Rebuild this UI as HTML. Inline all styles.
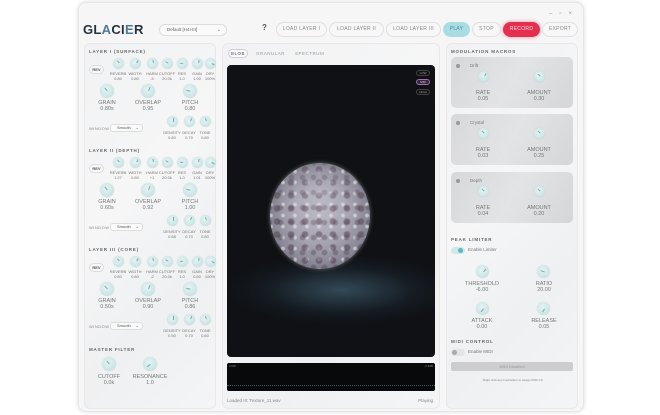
<!DOCTYPE html>
<html><head><meta charset="utf-8"><style>
*{box-sizing:border-box;margin:0;padding:0}
body{width:660px;height:415px;background:#fff;font-family:"Liberation Sans",sans-serif;position:relative;overflow:hidden;color:#555}
.win{position:absolute;left:78px;top:2px;width:506px;height:410px;background:#f6f6f7;border-radius:8px;box-shadow:0 0 4px rgba(0,0,0,.15);border:1px solid #e6e6e8}
.a{position:absolute}
.btn{position:absolute;top:22px;height:15px;border:1px solid #e0e0e3;border-radius:8px;background:#f7f7f8;font-size:5px;letter-spacing:.3px;color:#888;text-align:center;line-height:13px}
.panel{position:absolute;top:43px;background:linear-gradient(135deg,#f1f2f3,#f6f6f7 40%,#eef0f1 70%,#f4f5f6);border:1px solid #e8e8ea;border-radius:6px}
.k{position:absolute;border-radius:50%;background:radial-gradient(circle at 45% 40%,#e6f4f4,#c9e3e4 70%,#b9d8da);box-shadow:0 0 1px rgba(0,0,0,.15)}
.k::after{content:"";position:absolute;left:50%;top:22%;width:1px;height:30%;background:#7aa;transform-origin:50% 100%;transform:rotate(var(--r,30deg))}
.t{position:absolute;font-size:4px;color:#777;text-align:center;width:24px;margin-left:-12px;line-height:5px}
.T{position:absolute;font-size:5.5px;color:#777;text-align:center;width:40px;margin-left:-20px;line-height:6px}
.h{position:absolute;font-size:4.5px;letter-spacing:.8px;color:#666;font-weight:bold}
.rev{position:absolute;width:15px;height:9px;border:1px solid #ddd;border-radius:5px;background:#f8f8f9;font-size:4px;line-height:7px;text-align:center;color:#555;font-weight:bold}
.sel{position:absolute;height:8px;border:1px solid #ddd;border-radius:3px;background:#fafafa;font-size:4px;line-height:6px;padding-left:6px;color:#555}
.card{position:absolute;left:4px;width:122px;height:51px;border-radius:5px;background:linear-gradient(120deg,#d6d8d9,#e2e4e5 50%,#d4d6d7)}
.tog{position:absolute;width:14px;height:7px;border-radius:4px}
</style></head><body>
<div class="win">
 <div class="a" style="left:470px;top:8px;font-size:6px;color:#999;letter-spacing:7px">–▫×</div>
</div>
<div class="a" style="left:83px;top:22px;font-size:13px;font-weight:bold;color:#27323d;letter-spacing:.3px">GL<span style="color:#4f7b99">A</span>CI<span style="color:#4f7b99">E</span>R</div>
<div class="a" style="left:159px;top:24px;width:68px;height:12px;border:1px solid #ddd;border-radius:6px;background:#fafafa;font-size:4.5px;line-height:10px;padding-left:7px;color:#666">Default [H4+III]<span style="position:absolute;right:5px;font-size:5px">⌄</span></div>
<div class="a" style="left:262px;top:23px;font-size:8px;font-weight:bold;color:#555">?</div>
<div class="btn" style="left:276px;width:51px">LOAD LAYER I</div>
<div class="btn" style="left:329px;width:55px">LOAD LAYER II</div>
<div class="btn" style="left:386px;width:55px">LOAD LAYER III</div>
<div class="btn" style="left:443px;width:27px;background:#a9dde3;border-color:#a9dde3;color:#4a8a93">PLAY</div>
<div class="btn" style="left:472px;width:29px">STOP</div>
<div class="btn" style="left:503px;width:37px;background:#e3304e;border-color:#e3304e;color:#fde;box-shadow:0 0 4px rgba(227,48,78,.5)">RECORD</div>
<div class="btn" style="left:542px;width:36px">EXPORT</div>

<!-- LEFT PANEL -->
<div class="panel" style="left:84px;width:132px;height:366px">
 <div class="a" style="left:0;top:2px;width:132px;height:98px">
  <div class="h" style="left:4px;top:3px">LAYER I (SURFACE)</div>
  <div class="rev" style="left:4px;top:19px">REV</div>
  <div class="k" style="left:28px;top:12px;width:11px;height:11px;--r:-40deg"></div><div class="k" style="left:45px;top:12px;width:11px;height:11px"></div><div class="k" style="left:62px;top:12px;width:11px;height:11px;--r:-10deg"></div><div class="k" style="left:77px;top:12px;width:11px;height:11px;--r:-60deg"></div><div class="k" style="left:92px;top:12px;width:11px;height:11px;--r:-90deg"></div><div class="k" style="left:107px;top:12px;width:11px;height:11px;--r:10deg"></div><div class="k" style="left:120px;top:12px;width:11px;height:11px;--r:120deg"></div>
  <div class="t" style="left:33px;top:25px">REVERB<br>0.80</div><div class="t" style="left:50px;top:25px">WIDTH<br>0.80</div><div class="t" style="left:67px;top:25px">HARM<br>-5</div><div class="t" style="left:82px;top:25px">CUTOFF<br>20.0k</div><div class="t" style="left:97px;top:25px">RES<br>1.0</div><div class="t" style="left:112px;top:25px">GAIN<br>1.00</div><div class="t" style="left:125px;top:25px">DRY<br>100%</div>
  <div class="k" style="left:15px;top:38px;width:14px;height:14px;--r:-40deg"></div><div class="k" style="left:56px;top:38px;width:14px;height:14px;--r:20deg"></div><div class="k" style="left:98px;top:38px;width:14px;height:14px;--r:-80deg"></div>
  <div class="T" style="left:22px;top:54px">GRAIN<br>0.80s</div><div class="T" style="left:63px;top:54px">OVERLAP<br>0.95</div><div class="T" style="left:105px;top:54px">PITCH<br>0.80</div>
  <div class="a" style="left:4px;top:80px;font-size:4px;color:#888;letter-spacing:.5px">WINDOW</div>
  <div class="sel" style="left:25px;top:78px;width:33px">Smooth<span style="position:absolute;right:3px">⌄</span></div>
  <div class="k" style="left:82px;top:70px;width:11px;height:11px;--r:0deg"></div><div class="k" style="left:99px;top:70px;width:11px;height:11px;--r:20deg"></div><div class="k" style="left:115px;top:70px;width:11px;height:11px;--r:-20deg"></div>
  <div class="t" style="left:87px;top:84px">DENSITY<br>0.80</div><div class="t" style="left:104px;top:84px">DECAY<br>0.70</div><div class="t" style="left:120px;top:84px">TONE<br>0.80</div>
 </div>
 <div class="a" style="left:0;top:101px;width:132px;height:98px">
  <div class="h" style="left:4px;top:3px">LAYER II (DEPTH)</div>
  <div class="rev" style="left:4px;top:19px">REV</div>
  <div class="k" style="left:28px;top:12px;width:11px;height:11px;--r:-40deg"></div><div class="k" style="left:45px;top:12px;width:11px;height:11px"></div><div class="k" style="left:62px;top:12px;width:11px;height:11px;--r:-10deg"></div><div class="k" style="left:77px;top:12px;width:11px;height:11px;--r:-60deg"></div><div class="k" style="left:92px;top:12px;width:11px;height:11px;--r:-90deg"></div><div class="k" style="left:107px;top:12px;width:11px;height:11px;--r:10deg"></div><div class="k" style="left:120px;top:12px;width:11px;height:11px;--r:120deg"></div>
  <div class="t" style="left:33px;top:25px">REVERB<br>1.27</div><div class="t" style="left:50px;top:25px">WIDTH<br>0.80</div><div class="t" style="left:67px;top:25px">HARM<br>+1</div><div class="t" style="left:82px;top:25px">CUTOFF<br>20.0k</div><div class="t" style="left:97px;top:25px">RES<br>1.0</div><div class="t" style="left:112px;top:25px">GAIN<br>1.01</div><div class="t" style="left:125px;top:25px">DRY<br>100%</div>
  <div class="k" style="left:15px;top:38px;width:14px;height:14px;--r:-40deg"></div><div class="k" style="left:56px;top:38px;width:14px;height:14px;--r:20deg"></div><div class="k" style="left:98px;top:38px;width:14px;height:14px;--r:-80deg"></div>
  <div class="T" style="left:22px;top:54px">GRAIN<br>0.60s</div><div class="T" style="left:63px;top:54px">OVERLAP<br>0.92</div><div class="T" style="left:105px;top:54px">PITCH<br>1.00</div>
  <div class="a" style="left:4px;top:80px;font-size:4px;color:#888;letter-spacing:.5px">WINDOW</div>
  <div class="sel" style="left:25px;top:78px;width:33px">Smooth<span style="position:absolute;right:3px">⌄</span></div>
  <div class="k" style="left:82px;top:70px;width:11px;height:11px;--r:0deg"></div><div class="k" style="left:99px;top:70px;width:11px;height:11px;--r:20deg"></div><div class="k" style="left:115px;top:70px;width:11px;height:11px;--r:-20deg"></div>
  <div class="t" style="left:87px;top:84px">DENSITY<br>0.68</div><div class="t" style="left:104px;top:84px">DECAY<br>0.70</div><div class="t" style="left:120px;top:84px">TONE<br>0.80</div>
 </div>
 <div class="a" style="left:0;top:200px;width:132px;height:98px">
  <div class="h" style="left:4px;top:3px">LAYER III (CORE)</div>
  <div class="rev" style="left:4px;top:19px">REV</div>
  <div class="k" style="left:28px;top:12px;width:11px;height:11px;--r:-40deg"></div><div class="k" style="left:45px;top:12px;width:11px;height:11px"></div><div class="k" style="left:62px;top:12px;width:11px;height:11px;--r:-10deg"></div><div class="k" style="left:77px;top:12px;width:11px;height:11px;--r:-60deg"></div><div class="k" style="left:92px;top:12px;width:11px;height:11px;--r:-90deg"></div><div class="k" style="left:107px;top:12px;width:11px;height:11px;--r:10deg"></div><div class="k" style="left:120px;top:12px;width:11px;height:11px;--r:120deg"></div>
  <div class="t" style="left:33px;top:25px">REVERB<br>0.80</div><div class="t" style="left:50px;top:25px">WIDTH<br>0.80</div><div class="t" style="left:67px;top:25px">HARM<br>-2</div><div class="t" style="left:82px;top:25px">CUTOFF<br>20.0k</div><div class="t" style="left:97px;top:25px">RES<br>1.0</div><div class="t" style="left:112px;top:25px">GAIN<br>0.80</div><div class="t" style="left:125px;top:25px">DRY<br>100%</div>
  <div class="k" style="left:15px;top:38px;width:14px;height:14px;--r:-40deg"></div><div class="k" style="left:56px;top:38px;width:14px;height:14px;--r:20deg"></div><div class="k" style="left:98px;top:38px;width:14px;height:14px;--r:-80deg"></div>
  <div class="T" style="left:22px;top:54px">GRAIN<br>0.50s</div><div class="T" style="left:63px;top:54px">OVERLAP<br>0.90</div><div class="T" style="left:105px;top:54px">PITCH<br>0.86</div>
  <div class="a" style="left:4px;top:80px;font-size:4px;color:#888;letter-spacing:.5px">WINDOW</div>
  <div class="sel" style="left:25px;top:78px;width:33px">Smooth<span style="position:absolute;right:3px">⌄</span></div>
  <div class="k" style="left:82px;top:70px;width:11px;height:11px;--r:0deg"></div><div class="k" style="left:99px;top:70px;width:11px;height:11px;--r:20deg"></div><div class="k" style="left:115px;top:70px;width:11px;height:11px;--r:-20deg"></div>
  <div class="t" style="left:87px;top:84px">DENSITY<br>0.50</div><div class="t" style="left:104px;top:84px">DECAY<br>0.70</div><div class="t" style="left:120px;top:84px">TONE<br>0.80</div>
 </div>
 <div class="h" style="left:4px;top:303px">MASTER FILTER</div>
 <div class="k" style="left:17px;top:313px;width:14px;height:14px;--r:-40deg"></div><div class="k" style="left:58px;top:313px;width:14px;height:14px;--r:-130deg"></div>
 <div class="T" style="left:24px;top:330px">CUTOFF<br>0.0k</div><div class="T" style="left:65px;top:330px">RESONANCE<br>1.0</div>
</div>

<!-- CENTER -->
<div class="panel" style="left:222px;width:218px;height:366px">
 <div class="a" style="left:5px;top:5px;width:20px;height:9px;border:1px solid #d8c8dc;border-radius:5px;background:#fafafa;font-size:4.5px;line-height:7px;text-align:center;color:#556;letter-spacing:.5px">BLOB</div>
 <div class="a" style="left:33px;top:7px;font-size:4.5px;color:#999;letter-spacing:.5px">GRANULAR</div>
 <div class="a" style="left:72px;top:7px;font-size:4.5px;color:#999;letter-spacing:.5px">SPECTRUM</div>
 <div class="a" style="left:4px;top:21px;width:208px;height:292px;background:#0f1115;border-radius:4px;overflow:hidden">
  <div class="a" style="left:0;top:190px;width:208px;height:70px;background:radial-gradient(ellipse at 55% 50%,rgba(80,120,140,.55),rgba(40,60,75,.25) 45%,transparent 70%)"></div>
  <div class="a" style="left:43px;top:98px;width:100px;height:106px;border-radius:50%;background:radial-gradient(circle at 50% 50%,#b4b0bc,#a6a2b0 40%,#8a8896 65%,#62626e 85%,#3e3e48);box-shadow:0 0 4px #666"></div>
  <div class="a" style="left:43px;top:98px;width:100px;height:106px;border-radius:50%;background:radial-gradient(circle,rgba(70,50,65,.55) 0 2.5px,transparent 4px) 0 0/14px 13px,radial-gradient(circle,rgba(70,55,70,.4) 0 2px,transparent 3.5px) 5px 7px/11px 15px,radial-gradient(circle,rgba(235,238,242,.7) 0 1.2px,transparent 2.5px) 7px 3px/12px 11px;opacity:.85"></div>
  <div class="a" style="left:43px;top:98px;width:100px;height:106px;border-radius:50%;background:radial-gradient(circle at 50% 30%,rgba(230,230,240,.25),transparent 50%)"></div>
  <div class="a" style="right:5px;top:5px;width:14px;height:6px;border:1px solid #444;border-radius:3px;font-size:3px;color:#aaa;text-align:center;line-height:4px;background:#111">LOW</div>
  <div class="a" style="right:5px;top:14px;width:14px;height:6px;border:1px solid #a070b0;border-radius:3px;font-size:3px;color:#ddd;text-align:center;line-height:4px;background:#3a2440">MID</div>
  <div class="a" style="right:5px;top:24px;width:14px;height:6px;border:1px solid #444;border-radius:3px;font-size:3px;color:#aaa;text-align:center;line-height:4px;background:#111">HIGH</div>
 </div>
 <div class="a" style="left:4px;top:319px;width:208px;height:28px;background:#07090a;border-radius:2px">
  <div class="a" style="left:0;top:22px;width:208px;height:1px;border-top:1px dotted #2c6a6a"></div>
  <div class="a" style="left:2px;top:1px;font-size:3px;color:#888">LOW</div>
  <div class="a" style="right:2px;top:1px;font-size:3px;color:#888">-1.5dB</div>
 </div>
 <div class="a" style="left:4px;top:354px;font-size:4.5px;color:#888">Loaded III: Texture_11.wav</div>
 <div class="a" style="right:6px;top:354px;font-size:4.5px;color:#888">Playing</div>
</div>

<!-- RIGHT -->
<div class="panel" style="left:446px;width:132px;height:366px">
 <div class="h" style="left:4px;top:5px">MODULATION MACROS</div>
 <div class="card" style="top:13px">
  <div class="a" style="left:5px;top:7px;width:4px;height:4px;border-radius:50%;background:#999"></div>
  <div class="a" style="left:19px;top:6px;font-size:4.5px;color:#777">Drift</div>
  <div class="k" style="left:27px;top:14px;width:11px;height:11px"></div><div class="k" style="left:83px;top:14px;width:11px;height:11px;--r:-50deg"></div>
  <div class="T" style="left:32px;top:33px">RATE<br>0.05</div><div class="T" style="left:88px;top:33px">AMOUNT<br>0.30</div>
 </div>
 <div class="card" style="top:70px">
  <div class="a" style="left:5px;top:7px;width:4px;height:4px;border-radius:50%;background:#999"></div>
  <div class="a" style="left:19px;top:6px;font-size:4.5px;color:#777">Crystal</div>
  <div class="k" style="left:27px;top:14px;width:11px;height:11px;--r:-50deg"></div><div class="k" style="left:83px;top:14px;width:11px;height:11px;--r:-50deg"></div>
  <div class="T" style="left:32px;top:33px">RATE<br>0.03</div><div class="T" style="left:88px;top:33px">AMOUNT<br>0.25</div>
 </div>
 <div class="card" style="top:128px">
  <div class="a" style="left:5px;top:7px;width:4px;height:4px;border-radius:50%;background:#999"></div>
  <div class="a" style="left:19px;top:6px;font-size:4.5px;color:#777">Depth</div>
  <div class="k" style="left:27px;top:14px;width:11px;height:11px;--r:-50deg"></div><div class="k" style="left:83px;top:14px;width:11px;height:11px;--r:-50deg"></div>
  <div class="T" style="left:32px;top:33px">RATE<br>0.04</div><div class="T" style="left:88px;top:33px">AMOUNT<br>0.20</div>
 </div>
 <div class="h" style="left:4px;top:193px">PEAK LIMITER</div>
 <div class="tog" style="left:4px;top:203px;background:#cfe8ec"><div class="a" style="left:7px;top:1px;width:5px;height:5px;border-radius:50%;background:#5bb8c6"></div></div>
 <div class="a" style="left:21px;top:203px;font-size:4.5px;color:#777">Enable Limiter</div>
 <div class="k" style="left:29px;top:221px;width:13px;height:13px;--r:40deg"></div><div class="k" style="left:90px;top:221px;width:13px;height:13px;--r:-70deg"></div>
 <div class="T" style="left:35px;top:237px">THRESHOLD<br>-6.00</div><div class="T" style="left:97px;top:237px">RATIO<br>20.00</div>
 <div class="k" style="left:29px;top:258px;width:13px;height:13px;--r:-140deg"></div><div class="k" style="left:90px;top:258px;width:13px;height:13px;--r:-150deg"></div>
 <div class="T" style="left:35px;top:274px">ATTACK<br>0.00</div><div class="T" style="left:97px;top:274px">RELEASE<br>0.05</div>
 <div class="h" style="left:4px;top:295px">MIDI CONTROL</div>
 <div class="tog" style="left:4px;top:305px;background:#e4e4e6"><div class="a" style="left:1px;top:1px;width:5px;height:5px;border-radius:50%;background:#aaa"></div></div>
 <div class="a" style="left:21px;top:305px;font-size:4.5px;color:#777">Enable MIDI</div>
 <div class="a" style="left:4px;top:318px;width:122px;height:9px;background:#cdcdcf;border-radius:2px;font-size:4px;line-height:9px;text-align:center;color:#999">MIDI Disabled</div>
 <div class="a" style="left:0;top:334px;width:132px;text-align:center;font-size:3px;color:#888">Right-click any knob/slider to assign MIDI CC</div>
</div>
</body></html>
